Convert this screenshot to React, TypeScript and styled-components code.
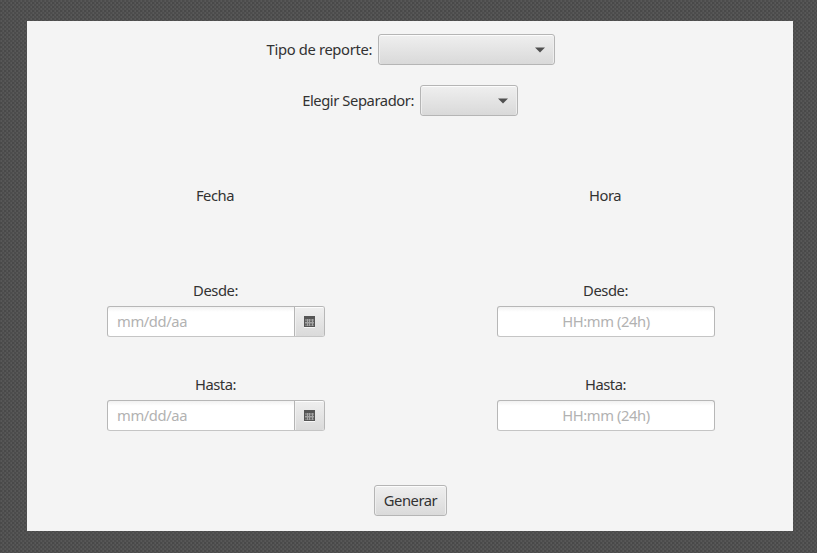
import React from "react";
import styled, { createGlobalStyle } from "styled-components";

const GlobalStyle = createGlobalStyle`
  * { box-sizing: border-box; }
  body {
    margin: 0;
    font-family: "Noto Sans", "Open Sans", sans-serif;
    font-size: 14.75px;
    line-height: 20px;
    color: #323232;
  }
`;

const Backdrop = styled.div`
  height: 553px;
  padding: 21px 24px 22px 27px;
  overflow: hidden;
  background:
    conic-gradient(#4c4c4c 25%, transparent 0 50%, #494949 0 75%, transparent 0) 0 0 / 4px 4px,
    repeating-linear-gradient(90deg, #525252 0 1px, #585858 1px 2px);
`;

const Panel = styled.main`
  height: 510px;
  padding-top: 13px;
  display: flex;
  flex-direction: column;
  align-items: center;
  background: #f4f4f4;
`;

const Label = styled.label<{ $spacing?: number }>`
  white-space: nowrap;
  letter-spacing: ${(p) => p.$spacing ?? -0.45}px;
  padding-bottom: 2px;
`;

const ChoiceRow = styled.div<{ $labelWidth: number }>`
  display: grid;
  grid-template-columns: ${(p) => p.$labelWidth}px auto;
  align-items: center;
  column-gap: 6px;
  height: 31px;
  margin-bottom: 20px;

  ${Label} { justify-self: end; }
`;

const Combo = styled.button<{ $width: number }>`
  width: ${(p) => p.$width}px;
  height: 31px;
  padding: 0 9px;
  display: flex;
  align-items: center;
  justify-content: flex-end;
  border: 1px solid #b5b5b5;
  border-radius: 3px;
  background: linear-gradient(#efefef, #d9d9d9);
  box-shadow: inset 0 1px #fcfcfc, inset 1px 0 #eeeeee, inset -1px 0 #eeeeee;
`;

const Columns = styled.div`
  display: grid;
  grid-template-columns: 218px 218px;
  column-gap: 172px;
  width: 608px;
  margin: 49px 0 0 2px;
`;

const Column = styled.section`
  display: flex;
  flex-direction: column;
  align-items: center;
`;

const Heading = styled.h2`
  height: 20px;
  margin: 0 2px 75px 0;
  font: inherit;
  letter-spacing: -0.45px;
`;

const Field = styled.div`
  display: flex;
  flex-direction: column;
  align-items: center;
  gap: 4px;
  width: 218px;
  margin-bottom: 37px;

  ${Label} {
    height: 22px;
    margin-right: 1px;
  }

  &:last-child { margin-bottom: 38px; }
`;

const InputFrame = styled.div`
  display: flex;
  width: 218px;
  height: 31px;
  border: 1px solid #b7b7b7;
  border-bottom-color: #c5c5c5;
  border-radius: 3px;
  background: linear-gradient(#f2f2f2 0, #ffffff 5px);
  overflow: hidden;
`;

const Input = styled.input<{ $centered?: boolean }>`
  flex: 1;
  min-width: 0;
  padding: 0 9px 2px;
  border: 0;
  outline: 0;
  background: transparent;
  font: inherit;
  letter-spacing: -0.4px;
  text-align: ${(p) => (p.$centered ? "center" : "left")};
  &::placeholder { color: #b2b2b2; opacity: 1; }
`;

const CalendarButton = styled.button`
  width: 30px;
  height: 29px;
  padding: 0 1px 0 0;
  display: flex;
  align-items: center;
  justify-content: center;
  border: 0;
  border-left: 1px solid #b5b5b5;
  background: linear-gradient(#efefef, #dadada);
  box-shadow: inset 0 1px #fcfcfc, inset 1px 0 #f0f0f0;
`;

const Generate = styled.button`
  width: 73px;
  height: 31px;
  margin: 16px 0 0 1px;
  padding: 0 0 2px;
  border: 1px solid #b5b5b5;
  border-radius: 3px;
  background: linear-gradient(#efefef, #dadada);
  box-shadow: inset 0 1px #fcfcfc, inset 1px 0 #eeeeee, inset -1px 0 #eeeeee;
  font: inherit;
  color: #323232;
  letter-spacing: -0.45px;
`;

const Arrow = () => (
  <svg width="10" height="6" viewBox="0 0 10 6">
    <path d="M0 .5H10L5 5.5Z" fill="#505050" />
  </svg>
);

const Calendar = () => (
  <svg width="11" height="12" viewBox="0 0 11 12" shapeRendering="crispEdges">
    <path d="M0 11H11V12H0Z" fill="#f6f6f6" />
    <path d="M0 0H11V11H0Z" fill="#555555" />
    <path d="M1 3H10V10H1Z" fill="#808080" />
    <path d="M1 5H10V6H1ZM1 8H10V9H1Z" fill="#666666" />
    <path d="M3 3H4V10H3ZM5 3H6V10H5ZM8 3H9V10H8ZM1 6H10V7H1Z" fill="#a4a4a4" />
  </svg>
);

const DateField = ({ label }: { label: string }) => (
  <Field>
    <Label>{label}</Label>
    <InputFrame>
      <Input placeholder="mm/dd/aa" />
      <CalendarButton aria-label="Calendario"><Calendar /></CalendarButton>
    </InputFrame>
  </Field>
);

const TimeField = ({ label }: { label: string }) => (
  <Field>
    <Label>{label}</Label>
    <InputFrame>
      <Input $centered placeholder="HH:mm (24h)" />
    </InputFrame>
  </Field>
);

export default function App() {
  return (
    <>
      <GlobalStyle />
      <Backdrop>
        <Panel>
          <ChoiceRow $labelWidth={107}>
            <Label $spacing={-0.34}>Tipo de reporte:</Label>
            <Combo $width={177} aria-label="Tipo de reporte"><Arrow /></Combo>
          </ChoiceRow>
          <ChoiceRow $labelWidth={112}>
            <Label $spacing={-0.42}>Elegir Separador:</Label>
            <Combo $width={98} aria-label="Elegir Separador"><Arrow /></Combo>
          </ChoiceRow>
          <Columns>
            <Column>
              <Heading>Fecha</Heading>
              <DateField label="Desde:" />
              <DateField label="Hasta:" />
            </Column>
            <Column>
              <Heading>Hora</Heading>
              <TimeField label="Desde:" />
              <TimeField label="Hasta:" />
            </Column>
          </Columns>
          <Generate>Generar</Generate>
        </Panel>
      </Backdrop>
    </>
  );
}
